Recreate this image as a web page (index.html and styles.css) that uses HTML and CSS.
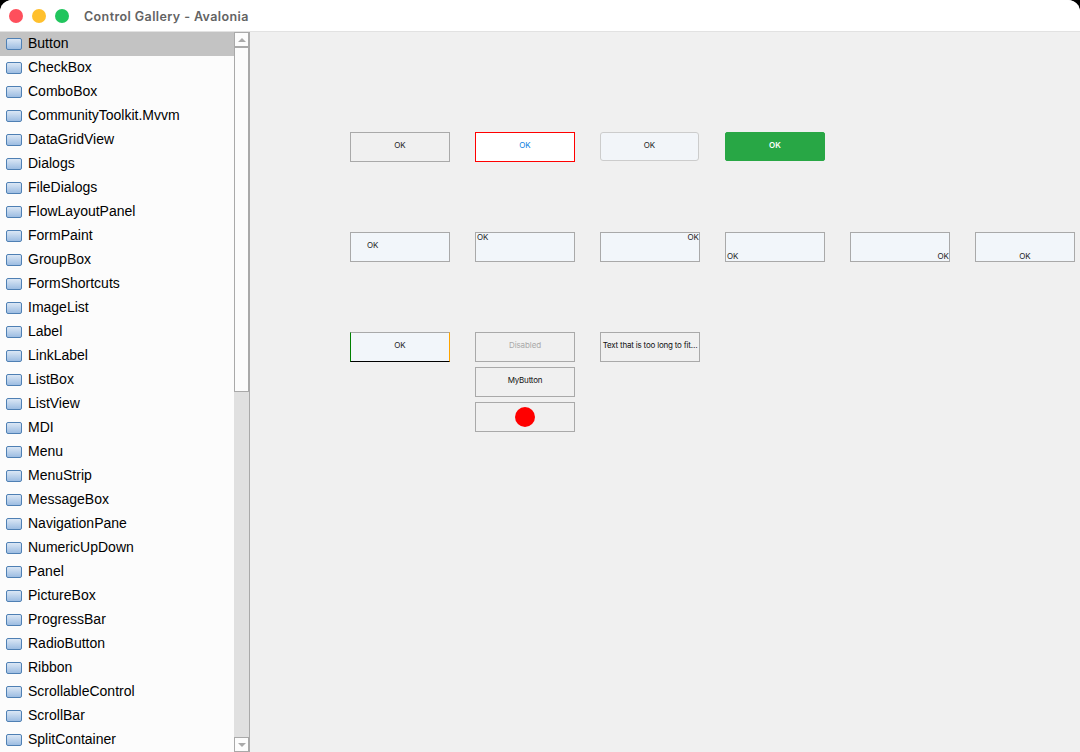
FILE: index.html
```html
<!DOCTYPE html>
<html lang="en">
<head>
    <meta charset="UTF-8">
    <title>Control Gallery - Avalonia</title>
    <link rel="stylesheet" href="styles.css">
</head>
<body>
    <div class="window">
        <header class="titlebar">
            <span class="light light-close"></span>
            <span class="light light-min"></span>
            <span class="light light-max"></span>
            <span class="title">Control Gallery - Avalonia</span>
        </header>
        <div class="content">
            <aside class="sidebar">
                <ul class="list">
                    <li class="list-item selected"><i class="item-icon"></i>Button</li>
                    <li class="list-item"><i class="item-icon"></i>CheckBox</li>
                    <li class="list-item"><i class="item-icon"></i>ComboBox</li>
                    <li class="list-item"><i class="item-icon"></i>CommunityToolkit.Mvvm</li>
                    <li class="list-item"><i class="item-icon"></i>DataGridView</li>
                    <li class="list-item"><i class="item-icon"></i>Dialogs</li>
                    <li class="list-item"><i class="item-icon"></i>FileDialogs</li>
                    <li class="list-item"><i class="item-icon"></i>FlowLayoutPanel</li>
                    <li class="list-item"><i class="item-icon"></i>FormPaint</li>
                    <li class="list-item"><i class="item-icon"></i>GroupBox</li>
                    <li class="list-item"><i class="item-icon"></i>FormShortcuts</li>
                    <li class="list-item"><i class="item-icon"></i>ImageList</li>
                    <li class="list-item"><i class="item-icon"></i>Label</li>
                    <li class="list-item"><i class="item-icon"></i>LinkLabel</li>
                    <li class="list-item"><i class="item-icon"></i>ListBox</li>
                    <li class="list-item"><i class="item-icon"></i>ListView</li>
                    <li class="list-item"><i class="item-icon"></i>MDI</li>
                    <li class="list-item"><i class="item-icon"></i>Menu</li>
                    <li class="list-item"><i class="item-icon"></i>MenuStrip</li>
                    <li class="list-item"><i class="item-icon"></i>MessageBox</li>
                    <li class="list-item"><i class="item-icon"></i>NavigationPane</li>
                    <li class="list-item"><i class="item-icon"></i>NumericUpDown</li>
                    <li class="list-item"><i class="item-icon"></i>Panel</li>
                    <li class="list-item"><i class="item-icon"></i>PictureBox</li>
                    <li class="list-item"><i class="item-icon"></i>ProgressBar</li>
                    <li class="list-item"><i class="item-icon"></i>RadioButton</li>
                    <li class="list-item"><i class="item-icon"></i>Ribbon</li>
                    <li class="list-item"><i class="item-icon"></i>ScrollableControl</li>
                    <li class="list-item"><i class="item-icon"></i>ScrollBar</li>
                    <li class="list-item"><i class="item-icon"></i>SplitContainer</li>
                </ul>
                <div class="scrollbar">
                    <div class="scroll-btn"><span class="arrow-up"></span></div>
                    <div class="scroll-thumb"></div>
                    <div class="scroll-track"></div>
                    <div class="scroll-btn"><span class="arrow-down"></span></div>
                </div>
            </aside>
            <main class="gallery">
                <div class="row">
                    <button class="btn">OK</button>
                    <button class="btn btn-red">OK</button>
                    <button class="btn btn-soft">OK</button>
                    <button class="btn btn-green">OK</button>
                </div>
                <div class="row">
                    <button class="btn btn-tint align-left-pad">OK</button>
                    <button class="btn btn-tint align-tl">OK</button>
                    <button class="btn btn-tint align-tr">OK</button>
                    <button class="btn btn-tint align-bl">OK</button>
                    <button class="btn btn-tint align-br">OK</button>
                    <button class="btn btn-tint align-bc">OK</button>
                </div>
                <div class="row">
                    <button class="btn btn-tint btn-multi">OK</button>
                    <div class="stack">
                        <button class="btn btn-disabled">Disabled</button>
                        <button class="btn btn-dark">MyButton</button>
                        <button class="btn"><span class="dot"></span></button>
                    </div>
                    <button class="btn btn-dark"><span class="ellipsis">Text that is too long to fit…</span></button>
                </div>
            </main>
        </div>
    </div>
</body>
</html>
```

FILE: styles.css
```css
* {
    box-sizing: border-box;
    margin: 0;
    padding: 0;
}

html, body {
    height: 100%;
    background-color: #000;
    overflow: hidden;
}

.window {
    display: flex;
    flex-direction: column;
    height: 752px;
    background-color: #f0f0f0;
    border-radius: 12px 12px 0 0;
    overflow: hidden;
}

.titlebar {
    display: flex;
    align-items: center;
    height: 32px;
    flex-shrink: 0;
    padding: 1px 0 0 9px;
    background-color: #fff;
    border-bottom: 1px solid #e2e2e2;
}

.light {
    width: 14px;
    height: 14px;
    margin-right: 9px;
    border-radius: 50%;
}

.light-close { background-color: #fe4f5c; }
.light-min { background-color: #ffc02d; }
.light-max { background-color: #21c55d; }

.title {
    margin-left: 6px;
    font-family: "Inter", sans-serif;
    font-size: 12.5px;
    font-weight: 600;
    letter-spacing: 0.4px;
    color: #636363;
}

.content {
    display: flex;
    flex: 1;
    min-height: 0;
}

.sidebar {
    display: flex;
    width: 250px;
    flex-shrink: 0;
    border-right: 1px solid #a9a9a9;
    background-color: #fcfcfc;
}

.list {
    flex: 1;
    list-style: none;
    overflow: hidden;
}

.list-item {
    display: flex;
    align-items: center;
    height: 24px;
    padding-bottom: 2px;
    font-family: "Liberation Sans", sans-serif;
    font-size: 14px;
    color: #000;
}

.list-item.selected {
    background-color: #c3c3c3;
}

.item-icon {
    width: 16px;
    height: 12px;
    margin: 1px 6px 0 6px;
    border: 1px solid #4f80b4;
    border-radius: 2px;
    background: linear-gradient(#dbe7f5, #9dbde2);
}

.scrollbar {
    display: flex;
    flex-direction: column;
    width: 15px;
    background-color: #e0e0e0;
}

.scroll-btn {
    display: flex;
    align-items: center;
    justify-content: center;
    height: 15px;
    flex-shrink: 0;
    background-color: #fcfcfc;
    border: 1px solid #a9a9a9;
}

.scroll-thumb {
    height: 345px;
    background-color: #fcfcfc;
    border: 1px solid #a9a9a9;
}

.scroll-track {
    flex: 1;
}

.arrow-up {
    border-left: 4px solid transparent;
    border-right: 4px solid transparent;
    border-bottom: 4px solid #a9a9a9;
}

.arrow-down {
    border-left: 4px solid transparent;
    border-right: 4px solid transparent;
    border-top: 4px solid #a9a9a9;
}

.gallery {
    flex: 1;
    display: flex;
    flex-direction: column;
    gap: 70px;
    padding: 100px 0 0 100px;
    opacity: 0.999;
}

.row {
    display: flex;
    align-items: flex-start;
    gap: 25px;
}

.stack {
    display: flex;
    flex-direction: column;
    gap: 5px;
}

.btn {
    display: flex;
    align-items: center;
    justify-content: center;
    width: 100px;
    height: 30px;
    flex-shrink: 0;
    border: 1px solid #a9a9a9;
    background-color: #f0f0f0;
    font-family: "Inter", sans-serif;
    font-size: 8px;
    line-height: 10px;
    color: #222;
    padding-bottom: 5px;
}

.btn-red {
    background-color: #fff;
    border-color: #f00;
    color: #0a7ce0;
}

.btn-soft {
    width: 99px;
    height: 29px;
    margin-right: 1px;
    padding-bottom: 3px;
    background-color: #f2f5f9;
    border-color: #ccc;
    border-radius: 3px;
}

.btn-green {
    height: 29px;
    padding-bottom: 3px;
    background-color: #28a745;
    border-color: #28a745;
    border-radius: 2px;
    color: #fff;
    font-weight: 600;
}

.btn-tint {
    background-color: #f2f6fa;
}

.align-left-pad {
    justify-content: flex-start;
    padding: 0 0 5px 16px;
}

.align-tl {
    align-items: flex-start;
    justify-content: flex-start;
    padding: 0 0 0 1px;
    line-height: 8px;
}

.align-tr {
    align-items: flex-start;
    justify-content: flex-end;
    padding: 0;
    line-height: 8px;
}

.align-bl {
    align-items: flex-end;
    justify-content: flex-start;
    padding: 0 0 0 1px;
}

.align-br {
    align-items: flex-end;
    justify-content: flex-end;
    padding: 0;
}

.align-bc {
    align-items: flex-end;
    padding: 0;
}

.btn-multi {
    border-left-color: #008000;
    border-bottom-color: #000;
    border-right-color: #ffa500;
}

.btn-disabled {
    color: #a9a9a9;
    letter-spacing: -0.1px;
}

.btn-dark {
    color: #111;
    letter-spacing: -0.2px;
}

.ellipsis {
    white-space: nowrap;
}

.dot {
    width: 20px;
    height: 20px;
    margin-top: 5px;
    border-radius: 50%;
    background-color: #f00;
}
```
